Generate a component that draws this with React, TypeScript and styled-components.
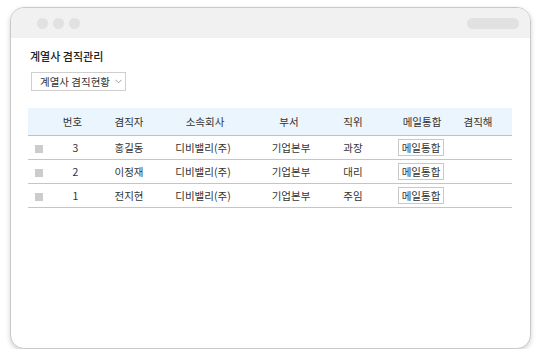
import React from "react";
import styled, { createGlobalStyle } from "styled-components";

const Global = createGlobalStyle`
  html, body { margin: 0; padding: 0; background: #ffffff; }
  body { font-family: "Noto Sans CJK KR", "Noto Sans", sans-serif; color: #333; }
  * { box-sizing: border-box; }
`;

const Frame = styled.div`
  margin: 7px 10px 0 10px;
  width: 521px;
  height: 342px;
  border: 1px solid #c9c9c9;
  border-radius: 14px;
  background: #fff;
  overflow: hidden;
  box-shadow: 0 2px 5px rgba(0, 0, 0, 0.18);
  display: flex;
  flex-direction: column;
`;

const TitleBar = styled.div`
  height: 30px;
  flex: none;
  background: #f1f1f1;
  display: flex;
  align-items: center;
  justify-content: space-between;
  padding: 0 11px 0 26px;
`;

const Dots = styled.div`
  display: flex;
  gap: 5px;
`;

const Dot = styled.span`
  width: 11px;
  height: 11px;
  border-radius: 50%;
  background: #e1e1e1;
`;

const Pill = styled.span`
  width: 52px;
  height: 11px;
  border-radius: 6px;
  background: #e1e1e1;
`;

const Content = styled.div`
  padding: 11px 18px 0 17px;
  display: flex;
  flex-direction: column;
`;

const PageTitle = styled.h1`
  margin: 0 0 0 2px;
  font-size: 11px;
  line-height: 14px;
  font-weight: 500;
  color: #222;
`;

const Select = styled.div`
  margin: 9px 0 0 3px;
  width: 95px;
  height: 19px;
  border: 1px solid #cfcfcf;
  display: flex;
  align-items: center;
  padding: 0 0 0 8px;
  gap: 5px;
  font-size: 10.5px;
  color: #333;
`;

const Chevron = styled.svg`
  width: 7px;
  height: 5px;
`;

const Table = styled.div`
  margin-top: 17px;
  width: 484px;
  display: flex;
  flex-direction: column;
`;

const cols = "22px 50px 67px 80px 74px 67px 62px 62px";

const HeadRow = styled.div`
  display: grid;
  grid-template-columns: ${cols};
  height: 28px;
  background: #ebf5fd;
  border-bottom: 1px solid #9fcaf0;
`;

const Row = styled.div`
  display: grid;
  grid-template-columns: ${cols};
  height: 24px;
  border-bottom: 1px solid #a4cdf1;
`;

const Cell = styled.div<{ $dx?: number }>`
  display: flex;
  align-items: center;
  justify-content: center;
  white-space: nowrap;
  font-size: 10.5px;
  color: #333;
  padding-left: ${(p) => (p.$dx && p.$dx > 0 ? p.$dx * 2 : 0)}px;
  padding-right: ${(p) => (p.$dx && p.$dx < 0 ? -p.$dx * 2 : 0)}px;
`;

const CheckCell = styled.div`
  display: flex;
  align-items: center;
  padding: 2px 0 0 7px;
`;

const Check = styled.span`
  width: 8px;
  height: 8px;
  background: #cccccc;
`;

const MailButton = styled.span`
  border: 1px solid #c8c8c8;
  background: #fff;
  padding: 1px 3px;
  font-size: 10.5px;
  line-height: 13px;
  color: #333;
`;

const shifts = [-2.5, -4.5, -2, 5, -1.5, 3, -3];

const rows = [
  { no: "3", name: "홍길동", co: "디비밸리(주)", dept: "기업본부", pos: "과장" },
  { no: "2", name: "이정재", co: "디비밸리(주)", dept: "기업본부", pos: "대리" },
  { no: "1", name: "전지현", co: "디비밸리(주)", dept: "기업본부", pos: "주임" },
];

const headers = ["번호", "겸직자", "소속회사", "부서", "직위", "메일통합", "겸직해"];

export default function App() {
  return (
    <>
      <Global />
      <Frame>
        <TitleBar>
          <Dots>
            <Dot />
            <Dot />
            <Dot />
          </Dots>
          <Pill />
        </TitleBar>
        <Content>
          <PageTitle>계열사 겸직관리</PageTitle>
          <Select>
            <span>계열사 겸직현황</span>
            <Chevron viewBox="0 0 7 5">
              <path d="M0.5 0.8 L3.5 3.8 L6.5 0.8" fill="none" stroke="#888" strokeWidth="0.8" />
            </Chevron>
          </Select>
          <Table>
            <HeadRow>
              <Cell />
              {headers.map((h, i) => (
                <Cell key={h} $dx={shifts[i]}>
                  {h}
                </Cell>
              ))}
            </HeadRow>
            {rows.map((r) => (
              <Row key={r.no}>
                <CheckCell>
                  <Check />
                </CheckCell>
                <Cell $dx={shifts[0] + 3}>{r.no}</Cell>
                <Cell $dx={shifts[1]}>{r.name}</Cell>
                <Cell $dx={shifts[2] - 2}>{r.co}</Cell>
                <Cell $dx={shifts[3] + 2}>{r.dept}</Cell>
                <Cell $dx={shifts[4]}>{r.pos}</Cell>
                <Cell $dx={shifts[5] - 1}>
                  <MailButton>메일통합</MailButton>
                </Cell>
                <Cell $dx={shifts[6]} />
              </Row>
            ))}
          </Table>
        </Content>
      </Frame>
    </>
  );
}
